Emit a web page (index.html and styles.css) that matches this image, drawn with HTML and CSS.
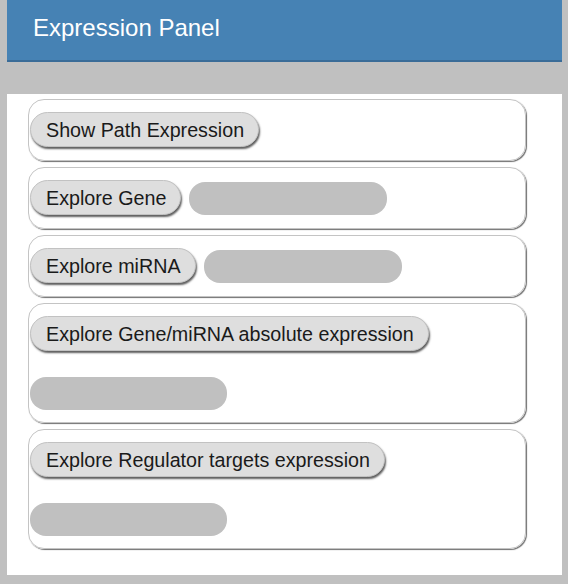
FILE: index.html
```html
<!DOCTYPE html>
<html>
<head>
<meta charset="utf-8">
<link rel="stylesheet" href="styles.css">
</head>
<body>
<div class="panel">
  <div class="panel-header">Expression Panel</div>
  <div class="panel-strip"></div>
  <div class="panel-body">
    <div class="card">
      <div class="row">
        <button class="btn">Show Path Expression</button>
      </div>
    </div>
    <div class="card">
      <div class="row">
        <button class="btn">Explore Gene</button>
        <div class="pill pill-inline"></div>
      </div>
    </div>
    <div class="card">
      <div class="row">
        <button class="btn">Explore miRNA</button>
        <div class="pill pill-inline"></div>
      </div>
    </div>
    <div class="card card-tall">
      <div class="row">
        <button class="btn">Explore Gene/miRNA absolute expression</button>
      </div>
      <div class="pill pill-block"></div>
    </div>
    <div class="card card-tall">
      <div class="row">
        <button class="btn">Explore Regulator targets expression</button>
      </div>
      <div class="pill pill-block"></div>
    </div>
  </div>
</div>
</body>
</html>
```

FILE: styles.css
```css
html, body {
  margin: 0;
  padding: 0;
}
body {
  background: #c0c0c0;
  height: 584px;
  box-sizing: border-box;
  padding: 0 6px 9px 7px;
  display: flex;
  flex-direction: column;
  font-family: "Liberation Sans", Arial, sans-serif;
}
.panel {
  flex: 1;
  display: flex;
  flex-direction: column;
}
.panel-header {
  background: #4682b4;
  color: #ffffff;
  font-size: 24px;
  line-height: 24px;
  height: 62px;
  box-sizing: border-box;
  padding: 16px 0 0 26px;
  border-bottom: 2px solid #3a6c98;
}
.panel-strip {
  height: 32px;
  background: #c0c0c0;
}
.panel-body {
  flex: 1;
  background: #ffffff;
  padding: 5px 36px 0 21px;
  display: flex;
  flex-direction: column;
  gap: 6px;
}
.card {
  height: 62px;
  box-sizing: border-box;
  border: 1px solid #c4c4c4;
  border-radius: 16px;
  box-shadow: 1px 1px 1px #707070;
  padding: 12px 1px 0 1px;
}
.card-tall {
  height: 120px;
}
.row {
  display: flex;
  align-items: flex-start;
  gap: 8px;
}
.btn {
  font-family: "Liberation Sans", Arial, sans-serif;
  font-size: 19.7px;
  line-height: 20px;
  color: #1a1a1a;
  background: #dedede;
  border: 1px solid #c2c2c2;
  border-radius: 18px;
  padding: 7px 14px 6px 15px;
  box-shadow: 1px 2px 2px #5e5e5e;
  margin: 0;
  white-space: nowrap;
}
.pill {
  background: #c0c0c0;
  height: 33px;
  width: 198px;
  border-radius: 16px;
}
.pill-inline {
  margin-top: 2px;
}
.pill-block {
  margin-top: 26px;
  width: 197px;
}
```
